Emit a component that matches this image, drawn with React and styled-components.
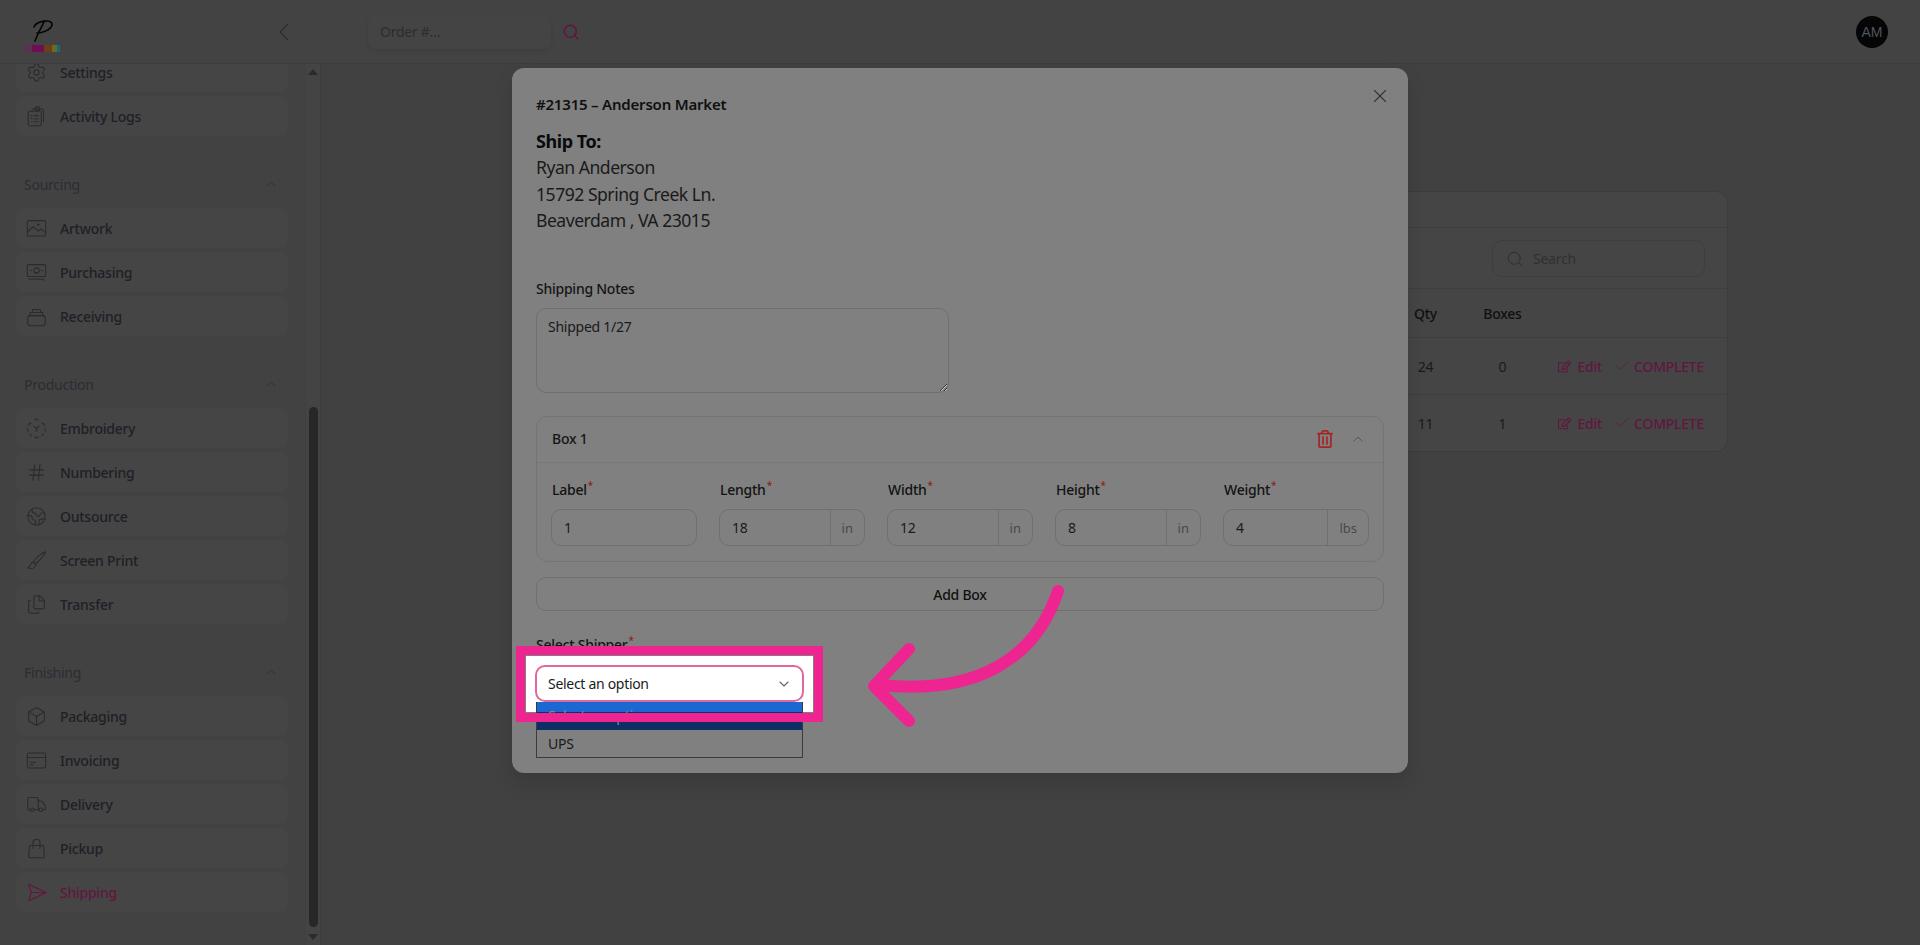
import React from "react";
import styled, { createGlobalStyle } from "styled-components";
import {
  Settings,
  Hash,
  Earth,
  Files,
  Box,
  Truck,
  ChevronUp,
  ChevronDown,
  ChevronLeft,
  Search,
  X,
  Check,
} from "lucide-react";
import { FaRegEdit, FaRegTrashAlt } from "react-icons/fa";

const PINK_DIM = "#62163f";

const GlobalStyle = createGlobalStyle`
  html, body {
    margin: 0;
    height: 100%;
    overflow: hidden;
    background: #414141;
    font-family: "Noto Sans", "Open Sans", Arial, sans-serif;
  }
  * { box-sizing: border-box; }
`;

const Page = styled.div`
  position: relative;
  width: 1920px;
  height: 945px;
  overflow: hidden;
  display: flex;
  flex-direction: column;
`;

const Header = styled.header`
  height: 64px;
  flex: none;
  display: flex;
  align-items: center;
  background: #434343;
  border-bottom: 1px solid #3c3c3c;
  position: relative;
  z-index: 2;
`;

const LogoZone = styled.div`
  width: 320px;
  height: 100%;
  flex: none;
  padding: 20px 20px 0 24px;
  display: flex;
  justify-content: space-between;
`;

const Logo = styled.div`
  width: 36px;
  display: flex;
  flex-direction: column;
  gap: 2px;
`;

const ColorBar = styled.div`
  height: 7px;
  display: flex;
`;

const ColorChip = styled.span`
  width: ${(p) => p.$w}px;
  background: ${(p) => p.$c};
`;

const BackButton = styled.div`
  color: #2c2c2c;
  margin-top: -4px;
`;

const OrderSearch = styled.div`
  margin-left: 48px;
  display: flex;
  align-items: center;
  gap: 11px;
`;

const OrderInput = styled.input`
  width: 183px;
  height: 34px;
  padding: 0 12px;
  border: 0;
  border-radius: 8px;
  background: #444;
  box-shadow: 0 2px 4px rgba(0, 0, 0, 0.08);
  font: 14px "Noto Sans", sans-serif;
  letter-spacing: -0.25px;
  outline: none;
  &::placeholder { color: #2d2d2d; opacity: 1; }
`;

const Avatar = styled.div`
  margin-left: auto;
  margin-right: 32px;
  width: 32px;
  height: 32px;
  border-radius: 50%;
  background: #050505;
  color: #4c5563;
  font: 14px "Liberation Sans", sans-serif;
  display: flex;
  align-items: center;
  justify-content: center;
`;

const Body = styled.div`
  flex: 1;
  min-height: 0;
  display: flex;
`;

const Sidebar = styled.aside`
  width: 321px;
  flex: none;
  display: flex;
  border-right: 1px solid #3d3d3d;
  background: #424242;
`;

const Nav = styled.nav`
  flex: 1;
  overflow: hidden;
`;

const NavList = styled.div`
  margin-top: -12px;
  padding: 0 17px 0 16px;
`;

const SectionHead = styled.div`
  height: 20px;
  margin: 38px 0 14px;
  padding: 0 9px 0 8px;
  display: flex;
  align-items: center;
  justify-content: space-between;
  font-size: 14px;
  letter-spacing: -0.25px;
  color: #2a2d33;
`;

const NavItem = styled.div`
  height: 40px;
  margin-bottom: 4px;
  padding-left: 10px;
  border-radius: 8px;
  background: #454545;
  display: flex;
  align-items: center;
  gap: 13px;
  font-size: 14px;
  font-weight: 500;
  letter-spacing: -0.25px;
  color: ${(p) => (p.$active ? PINK_DIM : "#1e2026")};
  svg { flex: none; color: ${(p) => (p.$active ? PINK_DIM : "#2b2b2b")}; }
`;

const Scrollbar = styled.div`
  width: 15px;
  flex: none;
  background: #444;
  display: flex;
  flex-direction: column;
  align-items: center;
  border-left: 1px solid #414141;
`;

const ScrollArrow = styled.div`
  width: 0;
  height: 0;
  border-left: 5px solid transparent;
  border-right: 5px solid transparent;
  ${(p) => (p.$down ? "border-top" : "border-bottom")}: 6px solid #2b2b2b;
  margin-top: ${(p) => (p.$down ? "7px" : "5px")};
`;

const ScrollThumb = styled.div`
  width: 9px;
  height: 520px;
  margin-top: 332px;
  border-radius: 5px;
  background: #272727;
`;

const Main = styled.main`
  flex: 1;
  padding: 127px 192px 0 380px;
  background: #414141;
`;

const Card = styled.section`
  height: 261px;
  border: 1px solid #3c3c3c;
  border-radius: 12px;
  background: #454545;
`;

const CardTitle = styled.div`
  height: 36px;
  border-bottom: 1px solid #3e3e3e;
`;

const Toolbar = styled.div`
  height: 61px;
  padding: 12px 22px 0 0;
  display: flex;
  justify-content: flex-end;
  border-bottom: 1px solid #3e3e3e;
`;

const SearchBox = styled.div`
  width: 213px;
  height: 37px;
  padding-left: 13px;
  display: flex;
  align-items: center;
  gap: 9px;
  border: 1px solid #3e3e3e;
  border-radius: 10px;
  font-size: 14px;
  letter-spacing: -0.25px;
  color: #303030;
  svg { color: #2c2c2c; }
`;

const TableRow = styled.div`
  display: grid;
  grid-template-columns: 1fr 77px 77px 163px;
  align-items: center;
  height: ${(p) => p.$h}px;
  padding-right: 23px;
  font-size: 14px;
  letter-spacing: -0.25px;
  color: ${(p) => (p.$head ? "#0f0f0f" : "#1a1a1a")};
  font-weight: ${(p) => (p.$head ? 500 : 400)};
  border-bottom: ${(p) => (p.$last ? "0" : "1px solid #3e3e3e")};
`;

const Cell = styled.div`
  grid-column: ${(p) => p.$col};
  text-align: center;
`;

const Actions = styled.div`
  grid-column: 4;
  display: flex;
  justify-content: flex-end;
  align-items: center;
  color: ${PINK_DIM};
  font-weight: 500;
`;

const ActionLink = styled.span`
  display: flex;
  align-items: center;
  gap: ${(p) => p.$inner}px;
  margin-left: ${(p) => p.$gap || 0}px;
`;

const Backdrop = styled.div`
  position: absolute;
  inset: 0;
  z-index: 3;
  display: flex;
  justify-content: center;
  padding-top: 68px;
`;

const Modal = styled.div`
  position: relative;
  width: 896px;
  height: 705px;
  padding: 26px 24px 0;
  border-radius: 12px;
  background: #808080;
  color: #141414;
  box-shadow: 0 10px 20px rgba(0, 0, 0, 0.12);
`;

const CloseButton = styled.div`
  position: absolute;
  top: 17px;
  right: 17px;
  color: #353535;
  display: flex;
`;

const ModalTitle = styled.h2`
  margin: 0 0 14px;
  font-size: 15px;
  line-height: 20px;
  font-weight: 600;
  letter-spacing: -0.2px;
  color: #101010;
`;

const ShipLabel = styled.div`
  font-size: 18px;
  line-height: 26px;
  font-weight: 700;
  letter-spacing: -0.45px;
  color: #0a0a0a;
`;

const ShipLine = styled.div`
  font-size: 17.6px;
  line-height: 26.5px;
  letter-spacing: -0.5px;
  color: #1a1a1a;
`;

const NotesLabel = styled.div`
  margin-top: 45.500px;
  font-size: 14px;
  line-height: 20px;
  font-weight: 500;
  letter-spacing: -0.25px;
`;

const Notes = styled.textarea`
  display: block;
  width: 413px;
  height: 85px;
  margin-top: 9px;
  padding: 8px 11px;
  border: 1px solid #6f6f6f;
  border-radius: 10px;
  background: transparent;
  font: 14px/20px "Noto Sans", sans-serif;
  letter-spacing: -0.25px;
  color: #1a1a1a;
  outline: none;
`;

const BoxCard = styled.div`
  height: 146px;
  margin-top: 23px;
  border: 1px solid #747474;
  border-radius: 12px;
`;

const BoxHead = styled.div`
  height: 46px;
  padding: 0 17px 2px 15px;
  display: flex;
  align-items: center;
  border-bottom: 1px solid #777;
  font-size: 14px;
  font-weight: 500;
  letter-spacing: -0.25px;
`;

const TrashButton = styled.span`
  margin-left: auto;
  margin-right: 16px;
  display: flex;
  color: #a32626;
`;

const BoxFields = styled.div`
  padding: 17px 14px 0;
  display: grid;
  grid-template-columns: repeat(5, 146px);
  column-gap: 22px;
`;

const FieldLabel = styled.div`
  height: 20px;
  margin-bottom: 9px;
  padding-left: 1px;
  font-size: 14px;
  line-height: 20px;
  font-weight: 500;
  letter-spacing: -0.25px;
  color: #131313;
`;

const Required = styled.sup`
  color: #8f2222;
  font-size: 10px;
  line-height: 0;
  margin-left: 1px;
`;

const InputGroup = styled.div`
  height: 37px;
  display: flex;
  border: 1px solid #6f6f6f;
  border-radius: 10px;
  overflow: hidden;
`;

const FieldInput = styled.input`
  flex: 1;
  min-width: 0;
  padding: 0 12px;
  border: 0;
  background: transparent;
  font: 14px "Noto Sans", sans-serif;
  letter-spacing: -0.25px;
  color: #1a1a1a;
  outline: none;
`;

const Unit = styled.span`
  flex: none;
  padding: 0 11px;
  display: flex;
  align-items: center;
  border-left: 1px solid #6f6f6f;
  font-size: 13px;
  color: #4a4a4a;
`;

const AddBox = styled.div`
  height: 34px;
  margin-top: 15px;
  border: 1px solid #6f6f6f;
  border-radius: 10px;
  display: flex;
  align-items: center;
  justify-content: center;
  font-size: 14px;
  font-weight: 500;
  letter-spacing: -0.25px;
  color: #101010;
`;

const ShipperField = styled.div`
  position: relative;
  width: 269px;
  margin-top: 24px;
  margin-left: -1px;
`;

const ShipperLabel = styled(FieldLabel)`
  margin-bottom: 10px;
  padding-left: 1px;
`;

/* white cut-out of the tutorial highlight, behind the select */
const Spotlight = styled.div`
  position: absolute;
  top: 21px;
  left: -9px;
  width: 287px;
  height: 56px;
  background: #fff;
`;

const SelectBox = styled.div`
  position: relative;
  height: 37px;
  padding: 0 10px 0 11px;
  display: flex;
  align-items: center;
  justify-content: space-between;
  border: 2px solid #e2689c;
  border-radius: 10px;
  background: #fff;
  font-size: 14px;
  letter-spacing: -0.3px;
  color: #1b1b1b;
  svg { color: #5f6774; }
`;

const OptionList = styled.div`
  position: relative;
  width: 267px;
  margin-left: 1px;
  border: 1px solid #3b3b3b;
  border-top: 0;
  font-size: 14px;
  letter-spacing: -0.25px;
`;

const Option = styled.div`
  height: 27.5px;
  padding: 0 11px;
  display: flex;
  align-items: center;
  color: ${(p) => (p.$selected ? "#8a8a8a" : "#1a1a1a")};
  background: ${(p) =>
    p.$selected
      ? "linear-gradient(#1b68d3 0 10px, #0d2f66 10px)"
      : "transparent"};
`;

/* pink rectangle drawn on top of the screenshot */
const HighlightFrame = styled.div`
  position: absolute;
  left: 516px;
  top: 646px;
  width: 307px;
  height: 76px;
  border: 9.5px solid #ee2490;
  z-index: 4;
`;

const ArrowMark = styled.svg`
  position: absolute;
  left: 850px;
  top: 570px;
  z-index: 4;
`;

const Stroke = ({ children, size = 21 }) => (
  <svg
    width={size}
    height={size}
    viewBox="0 0 24 24"
    fill="none"
    stroke="currentColor"
    strokeWidth="1.2"
    strokeLinecap="round"
    strokeLinejoin="round"
  >
    {children}
  </svg>
);

const LogsIcon = () => (
  <Stroke>
    <rect x="2.5" y="6" width="15" height="16.5" rx="2" />
    <path d="M7 3.500h10.500a2.500 2.500 0 0 1 2.500 2.500v12" />
    <rect x="10.500" y="1" width="5" height="4" rx="1.200" />
    <path d="M6 11h1M9.500 11H14M6 14.500h1M9.500 14.500H14M6 18h1M9.500 18H14" />
  </Stroke>
);

const ArtworkIcon = () => (
  <Stroke>
    <rect x="1.500" y="3" width="21" height="17.500" rx="1.500" />
    <path d="M1.500 16 8 10l6 5 3-2.500 5.500 4.500M14 6.500v2M13 7.500h2" />
  </Stroke>
);

const PurchasingIcon = () => (
  <Stroke>
    <rect x="1.500" y="3" width="21" height="13.500" rx="1.500" />
    <circle cx="12" cy="9.700" r="3" />
    <path d="M5 9.700h1.200M17.800 9.700H19M3 19.500l17 .2.800 1.500" />
  </Stroke>
);

const ReceivingIcon = () => (
  <Stroke>
    <rect x="2" y="11" width="20" height="11.500" rx="3" />
    <path d="M4.500 11 5 7.500h14l.5 3.500M7 7.500 7.500 4h9l.5 3.500" />
  </Stroke>
);

const EmbroideryIcon = () => (
  <Stroke>
    <path d="M10 2.500 12 1l2 1.500M3 8.500l.8-2 2-.8M18.200 5.700l2 .8.8 2M2 12v3M22 12v3M4 18.500l2 2M20 18.500l-2 2M10 21.500l2 1.500 2-1.500" />
    <path d="M9 9.500l3 2.500 3-2.500M12 12v3.500" />
  </Stroke>
);

const BrushIcon = () => (
  <Stroke>
    <path d="M22.500 2C18 3 11 9 8.500 13.500l2.500 2.500C15 13 21 6 22.500 2Z" />
    <path d="M8.500 14c-3 0-3.500 2-4 4-.3 1.300-1.500 2-2.500 2 1.500 1.500 7 2 8.500-1 .8-1.600.5-3-.5-3.500" />
  </Stroke>
);

const InvoiceIcon = () => (
  <Stroke>
    <rect x="1.500" y="3.500" width="21" height="17" rx="2" />
    <path d="M1.500 8.500h21M5 14h6M5 17h3" />
  </Stroke>
);

const BagIcon = () => (
  <Stroke>
    <path d="M4 8.500h16l1 13a1 1 0 0 1-1 1H4a1 1 0 0 1-1-1Z" />
    <path d="M8 12V5.500a4 4 0 0 1 8 0V12" />
  </Stroke>
);

const PlaneIcon = () => (
  <Stroke>
    <path d="M3 2.500 23 12 3 21.500 6 12Z" />
    <path d="M6 12h17" />
  </Stroke>
);

const sections = [
  {
    title: "Sourcing",
    items: [
      ["Artwork", <ArtworkIcon key="i" />],
      ["Purchasing", <PurchasingIcon key="i" />],
      ["Receiving", <ReceivingIcon key="i" />],
    ],
  },
  {
    title: "Production",
    items: [
      ["Embroidery", <EmbroideryIcon key="i" />],
      ["Numbering", <Hash key="i" size={21} strokeWidth={1.2} />],
      ["Outsource", <Earth key="i" size={21} strokeWidth={1.2} />],
      ["Screen Print", <BrushIcon key="i" />],
      ["Transfer", <Files key="i" size={21} strokeWidth={1.2} />],
    ],
  },
  {
    title: "Finishing",
    items: [
      ["Packaging", <Box key="i" size={21} strokeWidth={1.2} />],
      ["Invoicing", <InvoiceIcon key="i" />],
      ["Delivery", <Truck key="i" size={21} strokeWidth={1.2} />],
      ["Pickup", <BagIcon key="i" />],
      ["Shipping", <PlaneIcon key="i" />, true],
    ],
  },
];

const fields = [
  { label: "Label", value: "1" },
  { label: "Length", value: "18", unit: "in" },
  { label: "Width", value: "12", unit: "in" },
  { label: "Height", value: "8", unit: "in" },
  { label: "Weight", value: "4", unit: "lbs" },
];

const rows = [
  { qty: 24, boxes: 0, h: 57 },
  { qty: 11, boxes: 1, h: 56, last: true },
];

export default function App() {
  return (
    <Page>
      <GlobalStyle />
      <Header>
        <LogoZone>
          <Logo>
            <svg width="36" height="23" viewBox="0 0 36 23" fill="none">
              <path
                d="M10 7C12 1 29 -2 28 5C27 10 18 13 13 13M20 2C17 8 13 15 11 21"
                stroke="#050505"
                strokeWidth="1.6"
                strokeLinecap="round"
              />
            </svg>
            <ColorBar>
              <ColorChip $w={8} $c="#5c3250" />
              <ColorChip $w={12} $c="#6e0f55" />
              <ColorChip $w={8} $c="#6e3d1a" />
              <ColorChip $w={5} $c="#6a6a20" />
              <ColorChip $w={3} $c="#0f6a7a" />
            </ColorBar>
          </Logo>
          <BackButton>
            <ChevronLeft size={32} strokeWidth={0.8} />
          </BackButton>
        </LogoZone>
        <OrderSearch>
          <OrderInput placeholder="Order #..." />
          <Search size={18} strokeWidth={2} color={PINK_DIM} />
        </OrderSearch>
        <Avatar>AM</Avatar>
      </Header>
      <Body>
        <Sidebar>
          <Nav>
            <NavList>
              <NavItem>
                <Settings size={21} strokeWidth={1.2} />
                Settings
              </NavItem>
              <NavItem>
                <LogsIcon />
                Activity Logs
              </NavItem>
              {sections.map((s) => (
                <div key={s.title}>
                  <SectionHead>
                    {s.title}
                    <ChevronUp size={16} strokeWidth={1.2} />
                  </SectionHead>
                  {s.items.map(([name, icon, active]) => (
                    <NavItem key={name} $active={active}>
                      {icon}
                      {name}
                    </NavItem>
                  ))}
                </div>
              ))}
            </NavList>
          </Nav>
          <Scrollbar>
            <ScrollArrow />
            <ScrollThumb />
            <ScrollArrow $down />
          </Scrollbar>
        </Sidebar>
        <Main>
          <Card>
            <CardTitle />
            <Toolbar>
              <SearchBox>
                <Search size={18} strokeWidth={1.2} />
                Search
              </SearchBox>
            </Toolbar>
            <TableRow $head $h={49}>
              <Cell $col={2}>Qty</Cell>
              <Cell $col={3}>Boxes</Cell>
            </TableRow>
            {rows.map((r) => (
              <TableRow key={r.qty} $h={r.h} $last={r.last}>
                <Cell $col={2}>{r.qty}</Cell>
                <Cell $col={3}>{r.boxes}</Cell>
                <Actions>
                  <ActionLink $inner={6}>
                    <FaRegEdit size={13} />
                    Edit
                  </ActionLink>
                  <ActionLink $gap={12} $inner={4}>
                    <Check size={16} strokeWidth={1.2} />
                    COMPLETE
                  </ActionLink>
                </Actions>
              </TableRow>
            ))}
          </Card>
        </Main>
      </Body>
      <Backdrop>
        <Modal>
          <CloseButton>
            <X size={22} strokeWidth={1.2} />
          </CloseButton>
          <ModalTitle>#21315 – Anderson Market</ModalTitle>
          <ShipLabel>Ship To:</ShipLabel>
          <ShipLine>Ryan Anderson</ShipLine>
          <ShipLine>15792 Spring Creek Ln.</ShipLine>
          <ShipLine>Beaverdam , VA 23015</ShipLine>
          <NotesLabel>Shipping Notes</NotesLabel>
          <Notes defaultValue="Shipped 1/27" />
          <BoxCard>
            <BoxHead>
              Box 1
              <TrashButton>
                <FaRegTrashAlt size={18} />
              </TrashButton>
              <ChevronUp size={16} strokeWidth={1.2} color="#4a4a4a" />
            </BoxHead>
            <BoxFields>
              {fields.map((f) => (
                <div key={f.label}>
                  <FieldLabel>
                    {f.label}
                    <Required>*</Required>
                  </FieldLabel>
                  <InputGroup>
                    <FieldInput readOnly value={f.value} />
                    {f.unit && <Unit>{f.unit}</Unit>}
                  </InputGroup>
                </div>
              ))}
            </BoxFields>
          </BoxCard>
          <AddBox>Add Box</AddBox>
          <ShipperField>
            <ShipperLabel>
              Select Shipper
              <Required>*</Required>
            </ShipperLabel>
            <Spotlight />
            <SelectBox>
              Select an option
              <ChevronDown size={16} strokeWidth={1.6} />
            </SelectBox>
            <OptionList>
              <Option $selected>Select an option</Option>
              <Option>UPS</Option>
            </OptionList>
          </ShipperField>
        </Modal>
      </Backdrop>
      <HighlightFrame />
      <ArrowMark width="230" height="170" viewBox="850 570 230 170" fill="none">
        <path
          d="M1058 591C1035 660 975 695 880 685M909 649L874 686L909 721"
          stroke="#ee2490"
          strokeWidth="12"
          strokeLinecap="round"
          strokeLinejoin="round"
        />
      </ArrowMark>
    </Page>
  );
}
